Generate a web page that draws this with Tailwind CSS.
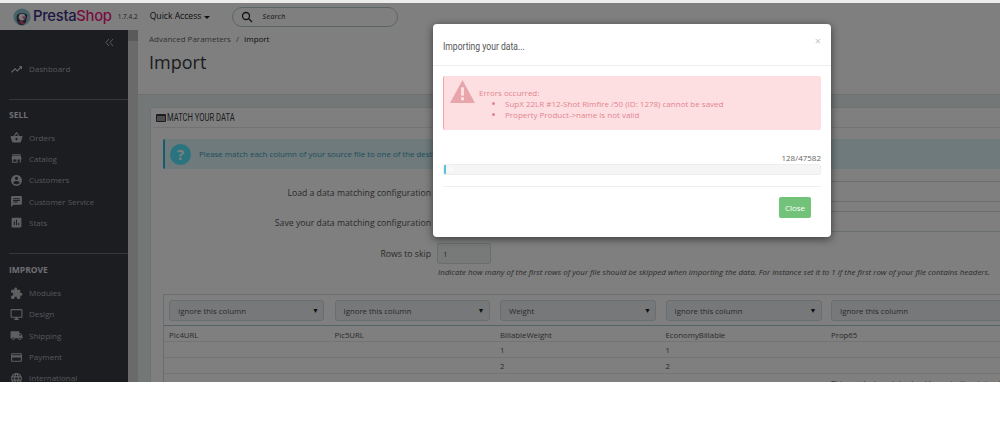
<!DOCTYPE html>
<html><head><meta charset="utf-8"><script src="https://cdn.jsdelivr.net/npm/@tailwindcss/browser@4"></script></head>
<body class="m-0 bg-white">
<div class="w-[1000px] h-[430px] overflow-hidden bg-white font-['Open_Sans',sans-serif] relative">
  <div class="h-[3px] bg-[#ececec]"></div>
  <div class="h-[379px] relative overflow-hidden flex flex-col bg-white">
    <header class="h-[27px] shrink-0 flex items-center bg-white pl-[13px]">
      <svg class="w-[18px] h-[18px] shrink-0" viewBox="0 0 24 24"><circle cx="12" cy="12" r="11.5" fill="#8fc6d2"/><path d="M5 11c1-5 11-6 14-1l-2 9-4 4-5-1-3-5z" fill="#3a3a4a"/><circle cx="12" cy="12" r="4.5" fill="#f3f3f3"/><path d="M12 11l6 1-3 4z" fill="#e0558a"/><path d="M7 18l5 4 4-1-4-4z" fill="#d8457f"/></svg>
      <span class="ml-[2px] text-[14.8px] leading-none font-['Inter',sans-serif] font-medium tracking-[-0.3px] text-[#3a3085]">Presta<span class="text-[#f01a80]">Shop</span></span>
      <span class="ml-[6px] text-[6.5px] text-[#3c3c3c]">1.7.4.2</span>
      <span class="ml-[12px] text-[8.6px] text-[#222] flex items-center">Quick Access<span class="ml-[3px] w-0 h-0 border-x-[3.5px] border-x-transparent border-t-[3.5px] border-t-[#222] mt-[2px]"></span></span>
      <div class="ml-[22px] w-[166px] h-[20px] rounded-full border border-[#b5c9cf] flex items-center pl-[8px]">
        <svg class="w-[12px] h-[12px]" viewBox="0 0 24 24" fill="none" stroke="#222" stroke-width="2.6"><circle cx="10" cy="10" r="7"/><path d="M15 15l7 7"/></svg>
        <span class="ml-[9px] text-[7.5px] italic font-semibold text-[#666]">Search</span>
      </div>
    </header>
    <div class="flex flex-1 min-h-0">
      <aside class="w-[128px] shrink-0 bg-[#363a41] text-[#a9adb3] text-[8px] relative">
        <div class="h-[25px] flex items-start justify-end pr-[14px] pt-[8px]">
          <svg class="w-[9px] h-[9px]" viewBox="0 0 10 10" fill="none" stroke="#bdbdbd" stroke-width="1"><path d="M4.5 1L1 5l3.5 4M9 1L5.5 5 9 9"/></svg>
        </div>
        <div class="h-[28px] flex items-center pl-[10px] gap-[6px] mt-[0px]">
          <svg class="w-[13px] h-[13px] shrink-0" viewBox="0 0 24 24" fill="#d9d9d9"><path d="M16 6l2.29 2.29-4.88 4.88-4-4L2 16.59 3.41 18l6-6 4 4 6.3-6.29L22 12V6z"/></svg><span>Dashboard</span>
        </div>
        <div class="ml-[9px] mt-[16px] border-t border-[#6a6e73]"></div>
        <div class="ml-[9px] mt-[9px] h-[11px] leading-[11px] text-[8.5px] font-bold text-[#dcdce4]">SELL</div>
        <nav class="mt-[7px]">
          <div class="h-[21.3px] flex items-center pl-[10px] gap-[6px]"><svg class="w-[13px] h-[13px] shrink-0" viewBox="0 0 24 24" fill="#bcbfc3"><path d="M17.21 9l-4.38-6.56c-.19-.28-.51-.42-.83-.42-.32 0-.64.14-.83.43L6.79 9H2c-.55 0-1 .45-1 1 0 .09.01.18.04.27l2.54 9.27c.23.84 1 1.46 1.92 1.46h13c.92 0 1.69-.62 1.93-1.46l2.54-9.27L23 10c0-.55-.45-1-1-1h-4.79zM9 9l3-4.4L15 9H9zm3 8c-1.1 0-2-.9-2-2s.9-2 2-2 2 .9 2 2-.9 2-2 2z"/></svg><span>Orders</span></div>
          <div class="h-[21.3px] flex items-center pl-[10px] gap-[6px]"><svg class="w-[13px] h-[13px] shrink-0" viewBox="0 0 24 24" fill="#bcbfc3"><path d="M20 4H4v2h16V4zm1 10v-2l-1-5H4l-1 5v2h1v6h10v-6h4v6h2v-6h1zm-9 4H6v-4h6v4z"/></svg><span>Catalog</span></div>
          <div class="h-[21.3px] flex items-center pl-[10px] gap-[6px]"><svg class="w-[13px] h-[13px] shrink-0" viewBox="0 0 24 24" fill="#bcbfc3"><path d="M12 2C6.48 2 2 6.48 2 12s4.48 10 10 10 10-4.48 10-10S17.52 2 12 2zm0 3c1.66 0 3 1.34 3 3s-1.34 3-3 3-3-1.34-3-3 1.34-3 3-3zm0 14.2c-2.5 0-4.71-1.28-6-3.22.03-1.99 4-3.08 6-3.08 1.99 0 5.97 1.09 6 3.08-1.29 1.94-3.5 3.22-6 3.22z"/></svg><span>Customers</span></div>
          <div class="h-[21.3px] flex items-center pl-[10px] gap-[6px]"><svg class="w-[13px] h-[13px] shrink-0" viewBox="0 0 24 24" fill="#bcbfc3"><path d="M20 2H4c-1.1 0-1.99.9-1.99 2L2 22l4-4h14c1.1 0 2-.9 2-2V4c0-1.1-.9-2-2-2zM6 9h12v2H6V9zm8 5H6v-2h8v2zm4-6H6V6h12v2z"/></svg><span>Customer Service</span></div>
          <div class="h-[21.3px] flex items-center pl-[10px] gap-[6px]"><svg class="w-[13px] h-[13px] shrink-0" viewBox="0 0 24 24" fill="#bcbfc3"><path d="M19 3H5c-1.1 0-2 .9-2 2v14c0 1.1.9 2 2 2h14c1.1 0 2-.9 2-2V5c0-1.1-.9-2-2-2zM9 17H7v-7h2v7zm4 0h-2V7h2v10zm4 0h-2v-4h2v4z"/></svg><span>Stats</span></div>
        </nav>
        <div class="ml-[9px] mt-[20px] border-t border-[#6a6e73]"></div>
        <div class="ml-[9px] mt-[10px] h-[11px] leading-[11px] text-[8.5px] font-bold text-[#dcdce4]">IMPROVE</div>
        <nav class="mt-[7px]">
          <div class="h-[21.3px] flex items-center pl-[10px] gap-[6px]"><svg class="w-[13px] h-[13px] shrink-0" viewBox="0 0 24 24" fill="#bcbfc3"><path d="M20.5 11H19V7c0-1.1-.9-2-2-2h-4V3.5C13 2.12 11.88 1 10.5 1S8 2.12 8 3.5V5H4c-1.1 0-1.99.9-1.99 2v3.8H3.5c1.49 0 2.7 1.21 2.7 2.7s-1.21 2.7-2.7 2.7H2V20c0 1.1.9 2 2 2h3.8v-1.5c0-1.49 1.21-2.7 2.7-2.7 1.49 0 2.7 1.21 2.7 2.7V22H17c1.1 0 2-.9 2-2v-4h1.5c1.38 0 2.5-1.12 2.5-2.5S21.88 11 20.5 11z"/></svg><span>Modules</span></div>
          <div class="h-[21.3px] flex items-center pl-[10px] gap-[6px]"><svg class="w-[13px] h-[13px] shrink-0" viewBox="0 0 24 24" fill="#bcbfc3"><path d="M21 2H3c-1.1 0-2 .9-2 2v12c0 1.1.9 2 2 2h7v2H8v2h8v-2h-2v-2h7c1.1 0 2-.9 2-2V4c0-1.1-.9-2-2-2zm0 14H3V4h18v12z"/></svg><span>Design</span></div>
          <div class="h-[21.3px] flex items-center pl-[10px] gap-[6px]"><svg class="w-[13px] h-[13px] shrink-0" viewBox="0 0 24 24" fill="#bcbfc3"><path d="M20 8h-3V4H3c-1.1 0-2 .9-2 2v11h2c0 1.66 1.34 3 3 3s3-1.34 3-3h6c0 1.66 1.34 3 3 3s3-1.34 3-3h2v-5l-3-4zM6 18.5c-.83 0-1.5-.67-1.5-1.5s.67-1.5 1.5-1.5 1.5.67 1.5 1.5-.67 1.5-1.5 1.5zm13.5-9l1.96 2.5H17V9.5h2.5zm-1.5 9c-.83 0-1.5-.67-1.5-1.5s.67-1.5 1.5-1.5 1.5.67 1.5 1.5-.67 1.5-1.5 1.5z"/></svg><span>Shipping</span></div>
          <div class="h-[21.3px] flex items-center pl-[10px] gap-[6px]"><svg class="w-[13px] h-[13px] shrink-0" viewBox="0 0 24 24" fill="#bcbfc3"><path d="M20 4H4c-1.11 0-1.99.89-1.99 2L2 18c0 1.11.89 2 2 2h16c1.11 0 2-.89 2-2V6c0-1.11-.89-2-2-2zm0 14H4v-6h16v6zm0-10H4V6h16v2z"/></svg><span>Payment</span></div>
          <div class="h-[21.3px] flex items-center pl-[10px] gap-[6px]"><svg class="w-[13px] h-[13px] shrink-0" viewBox="0 0 24 24" fill="#bcbfc3"><path d="M11.99 2C6.47 2 2 6.48 2 12s4.47 10 9.99 10C17.52 22 22 17.52 22 12S17.52 2 11.99 2zm6.93 6h-2.95c-.32-1.25-.78-2.45-1.38-3.56 1.84.63 3.37 1.91 4.33 3.56zM12 4.04c.83 1.2 1.48 2.53 1.91 3.96h-3.82c.43-1.43 1.08-2.76 1.91-3.96zM4.26 14C4.1 13.36 4 12.69 4 12s.1-1.36.26-2h3.38c-.08.66-.14 1.32-.14 2 0 .68.06 1.34.14 2H4.26zm.82 2h2.95c.32 1.25.78 2.45 1.38 3.56-1.84-.63-3.37-1.9-4.33-3.56zm2.95-8H5.08c.96-1.66 2.49-2.93 4.33-3.56C8.81 5.55 8.35 6.75 8.03 8zM12 19.96c-.83-1.2-1.48-2.53-1.91-3.96h3.82c-.43 1.43-1.08 2.76-1.91 3.96zM14.34 14H9.66c-.09-.66-.16-1.32-.16-2 0-.68.07-1.35.16-2h4.68c.09.65.16 1.32.16 2 0 .68-.07 1.34-.16 2zm.25 5.56c.6-1.11 1.06-2.31 1.38-3.56h2.95c-.96 1.65-2.49 2.93-4.33 3.56zM16.36 14c.08-.66.14-1.32.14-2 0-.68-.06-1.34-.14-2h3.38c.16.64.26 1.31.26 2s-.1 1.36-.26 2h-3.38z"/></svg><span>International</span></div>
        </nav>
      </aside>
      <div class="w-[10px] shrink-0 bg-[#f1f1f1] flex flex-col"><div class="h-[11px] bg-[#b4b4b4]"></div><div class="flex-1 bg-[#d4d4d4]"></div></div>
      <main class="flex-1 min-w-0 overflow-hidden bg-[#e9eeef] text-[#363a41]">
        <div class="h-[65px] bg-white pl-[11px] border-b border-[#dfe3e3]">
          <div class="pt-[3px] h-[18px] text-[8px] leading-[12px] text-[#666]">Advanced Parameters <span class="mx-[3px]">/</span> <span class="text-[#222]">Import</span></div>
          <div class="mt-[1px] text-[18px] leading-[26px] text-[#363a41]">Import</div>
        </div>
        <section class="ml-[12px] mt-[12px] w-[1000px] bg-white border border-[#dfe3e3] rounded-[3px]">
          <div class="h-[20px] mx-[2px] border-b border-[#e6e6e6] flex items-center pl-[3px] text-[#363a41]">
            <svg class="w-[10px] h-[8px] mr-[1px] shrink-0" viewBox="0 0 10 8"><rect width="10" height="8" rx="1" fill="#363a41"/><rect x="1" y="2" width="8" height="5" fill="#9a9a9a"/></svg><span class="inline-block origin-left scale-x-[0.76] whitespace-nowrap font-['Roboto',sans-serif] text-[10px]">MATCH YOUR DATA</span>
          </div>
          <div class="ml-[12px] mt-[11px] h-[30px] bg-[#dcf4f9] border-l-2 border-[#25b9d7] rounded-[2px] flex items-center pl-[5px] text-[7.9px] text-[#3f9fb5]">
            <span class="w-[21px] h-[21px] rounded-full bg-[#55e8ff] text-white font-bold text-[15px] flex items-center justify-center">?</span>
            <span class="ml-[8px] pt-[2px]">Please match each column of your source file to one of the destination columns.</span>
          </div>
          <div class="mt-[12px] h-[21px] flex items-center"><span class="w-[280px] text-right text-[8.7px] text-[#555] pt-[4px]">Load a data matching configuration</span><span class="ml-[6px] w-[700px] h-[21px] border border-[#d3dde0] rounded-[2px] bg-white"></span></div>
          <div class="mt-[9px] h-[21px] flex items-center"><span class="w-[280px] text-right text-[8.7px] text-[#555] pt-[4px]">Save your data matching configuration</span><span class="ml-[6px] w-[700px] h-[21px] border border-[#d3dde0] rounded-[2px] bg-white"></span></div>
          <div class="mt-[11px] h-[21px] flex items-center"><span class="w-[280px] text-right text-[8.7px] text-[#555] pt-[2px]">Rows to skip</span><span class="ml-[6px] w-[54px] h-[21px] border border-[#d3dde0] rounded-[2px] bg-[#f0f4f5] text-[8px] text-[#555] pl-[5px] leading-[19px]">1</span></div>
          <div class="ml-[287px] mt-[1px] h-[14px] leading-[14px] italic text-[7.95px] text-[#555] whitespace-nowrap">Indicate how many of the first rows of your file should be skipped when importing the data. For instance set it to 1 if the first row of your file contains headers.</div>
          <div class="ml-[12px] mt-[15px] border border-[#d5dada] border-b-0 text-[7.8px] text-[#555]">
            <div class="grid grid-cols-[repeat(6,165.5px)] h-[31px] pt-[5px] border-b border-[#a9c6d0] text-[#555]">
              <div class="pl-[5px]"><div class="w-[155px] h-[21px] rounded-[3px] border border-[#d3dde0] bg-[#edf1f3] pl-[8px] pr-[4px] pt-[2px] flex items-center justify-between">Ignore this column<span class="text-[7px] text-[#222]">▼</span></div></div>
              <div class="pl-[5px]"><div class="w-[155px] h-[21px] rounded-[3px] border border-[#d3dde0] bg-[#edf1f3] pl-[8px] pr-[4px] pt-[2px] flex items-center justify-between">Ignore this column<span class="text-[7px] text-[#222]">▼</span></div></div>
              <div class="pl-[5px]"><div class="w-[156px] h-[21px] rounded-[3px] border border-[#d3dde0] bg-[#edf1f3] pl-[8px] pr-[4px] pt-[2px] flex items-center justify-between">Weight<span class="text-[7px] text-[#222]">▼</span></div></div>
              <div class="pl-[5px]"><div class="w-[156px] h-[21px] rounded-[3px] border border-[#d3dde0] bg-[#edf1f3] pl-[8px] pr-[4px] pt-[2px] flex items-center justify-between">Ignore this column<span class="text-[7px] text-[#222]">▼</span></div></div>
              <div class="pl-[5px]"><div class="w-[200px] h-[21px] rounded-[3px] border border-[#d3dde0] bg-[#edf1f3] pl-[8px] pr-[4px] pt-[2px] flex items-center justify-between">Ignore this column</div></div>
            </div>
            <div class="grid grid-cols-[repeat(6,165.5px)] h-[16px] leading-[18px] border-b border-[#e6e9e9] px-[5px]"><span>Pic4URL</span><span>Pic5URL</span><span>BillableWeight</span><span>EconomyBillable</span><span>Prop65</span></div>
            <div class="grid grid-cols-[repeat(6,165.5px)] h-[16px] leading-[17px] border-b border-[#e6e9e9] px-[5px]"><span></span><span></span><span>1</span><span>1</span><span></span></div>
            <div class="grid grid-cols-[repeat(6,165.5px)] h-[16px] leading-[17px] border-b border-[#e6e9e9] px-[5px]"><span></span><span></span><span>2</span><span>2</span><span></span></div>
            <div class="grid grid-cols-[repeat(6,165.5px)] pt-[3px] leading-[12px] px-[5px]"><span></span><span></span><span></span><span></span><span class="whitespace-nowrap">This product contains lead know to the state of California</span></div>
          </div>
        </section>
      </main>
    </div>
    <div class="absolute inset-0 bg-black/50"></div>
  </div>
  <div class="absolute left-[433px] top-[24px] w-[398px] h-[213px] bg-white rounded-[4px] shadow-[0_2px_8px_rgba(0,0,0,0.55)] flex flex-col">
    <div class="h-[42px] shrink-0 border-b border-[#eeeeee] flex items-start justify-between pl-[10px] pr-[10px] pt-[16px]">
      <span class="inline-block origin-left scale-x-[0.78] whitespace-nowrap font-['Roboto',sans-serif] text-[11px] leading-[13px] text-[#555]">Importing your data...</span>
      <span class="-mt-[7px] text-[11px] text-[#c4c4c4]">×</span>
    </div>
    <div class="mx-[10px] mt-[10px] h-[54px] shrink-0 bg-[#fddfe2] border-l border-[#f0a5ac] rounded-[2px] flex text-[8px] leading-[11.3px] text-[#e2848e]">
      <svg class="w-[25px] h-[23px] ml-[6px] mt-[4px] shrink-0" viewBox="0 0 24 22"><path d="M12 0L24 22H0z" fill="#e8a5ac"/><rect x="10.6" y="7" width="2.8" height="8" fill="#fddfe2"/><rect x="10.6" y="16.5" width="2.8" height="3" fill="#fddfe2"/></svg>
      <div class="ml-[4px] pt-[10.5px]">
        <div>Errors occurred:</div>
        <ul class="list-disc pl-[26px]">
          <li>SupX 22LR #12-Shot Rimfire /50 (ID: 1278) cannot be saved</li>
          <li>Property Product-&gt;name is not valid</li>
        </ul>
      </div>
    </div>
    <div class="mx-[10px] mt-[22px] text-right text-[8px] leading-[12px] text-[#666]">128/47582</div>
    <div class="mx-[10px] h-[11px] shrink-0 bg-[#f5f5f5] rounded-[2px] border border-[#eeeeee] overflow-hidden flex">
      <div class="w-[1.5px] bg-[#5bc0de]"></div><span class="text-[7px] leading-[9px] text-white pl-[2px]">%</span>
    </div>
    <div class="mx-[10px] mt-[11px] border-t border-[#eeeeee]"></div>
    <div class="flex justify-end mr-[20px] mt-[10px]">
      <span class="w-[32px] h-[21px] bg-[#72c279] rounded-[2px] text-white text-[8px] leading-[21px] text-center">Close</span>
    </div>
  </div>
</div>
</body></html>
